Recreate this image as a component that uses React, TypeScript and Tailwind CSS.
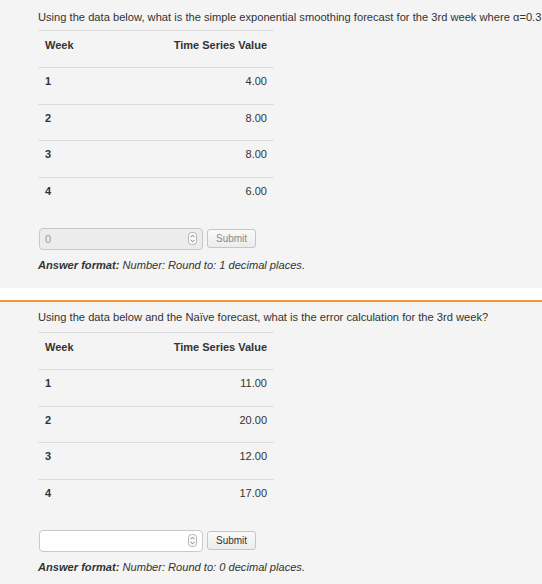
import React from "react";

type Question = {
  text: string;
  rows: { week: number; value: string }[];
  answer: string;
  disabled: boolean;
  decimals: number;
};

const questions: Question[] = [
  {
    text: "Using the data below, what is the simple exponential smoothing forecast for the 3rd week where \u03b1=0.3",
    rows: [
      { week: 1, value: "4.00" },
      { week: 2, value: "8.00" },
      { week: 3, value: "8.00" },
      { week: 4, value: "6.00" },
    ],
    answer: "0",
    disabled: true,
    decimals: 1,
  },
  {
    text: "Using the data below and the Na\u00efve forecast, what is the error calculation for the 3rd week?",
    rows: [
      { week: 1, value: "11.00" },
      { week: 2, value: "20.00" },
      { week: 3, value: "12.00" },
      { week: 4, value: "17.00" },
    ],
    answer: "",
    disabled: false,
    decimals: 0,
  },
];

function Spinner() {
  return (
    <svg width="9" height="13" viewBox="0 0 9 13" className="shrink-0">
      <rect x="0.5" y="0.5" width="8" height="12" rx="3" fill="#fafafa" stroke="#b5b5b5" />
      <path d="M2.7 5 L4.5 3.2 L6.3 5" fill="none" stroke="#666" strokeWidth="0.9" />
      <path d="M2.7 8 L4.5 9.8 L6.3 8" fill="none" stroke="#666" strokeWidth="0.9" />
    </svg>
  );
}

function QuestionBlock({ q, top }: { q: Question; top: boolean }) {
  return (
    <section
      className={`bg-[#f4f4f4] pl-[38px] ${
        top ? "h-[288px] pt-[9px]" : "border-t-2 border-[#f7923a] pt-[7px] pb-[20px]"
      }`}
    >
      <p
        className={`text-[11.15px] leading-[16px] text-[#333] whitespace-nowrap ${
          top ? "mb-[5px]" : "mb-[7px]"
        }`}
      >
        {q.text}
      </p>

      {/* data table */}
      <div className="w-[236px] text-[11px] leading-[16px] text-[#333]">
        <div className="flex h-[37px] border-t border-[#dcdcdc] pt-[6px] px-[7px] font-bold">
          <span className="flex-1">Week</span>
          <span>Time Series Value</span>
        </div>
        {q.rows.map((r) => (
          <div key={r.week} className="flex h-[36.7px] border-t border-[#dcdcdc] pt-[5px] px-[7px]">
            <span className="flex-1 font-bold">{r.week}</span>
            <span>{r.value}</span>
          </div>
        ))}
      </div>

      {/* answer input */}
      <div className="flex items-center gap-[4px] mt-[14px] ml-px">
        <div
          className={`flex items-center w-[164px] h-[22px] rounded-[4px] border border-[#c8c8c8] pl-[5px] pr-[5px] ${
            q.disabled ? "bg-[#ececec]" : "bg-white"
          }`}
        >
          <span className="flex-1 text-[11px] text-[#9a9a9a]">{q.answer}</span>
          <Spinner />
        </div>
        <button
          className={`h-[19px] px-[8px] rounded-[3px] border border-[#c6c6c6] bg-gradient-to-b from-[#fafafa] to-[#ececec] text-[10px] leading-none ${
            q.disabled ? "text-[#8a8a8a]" : "text-[#333]"
          }`}
        >
          Submit
        </button>
      </div>

      <p className="mt-[7px] text-[11.1px] leading-[16px] italic text-[#333]">
        <span className="font-bold">Answer format:</span> Number: Round to: {q.decimals} decimal places.
      </p>
    </section>
  );
}

export default function App() {
  return (
    <div className="min-h-[584px] bg-white font-['Liberation_Sans',Arial,sans-serif]">
      <QuestionBlock q={questions[0]} top />
      <div className="h-[12px] bg-white" />
      <QuestionBlock q={questions[1]} top={false} />
    </div>
  );
}
